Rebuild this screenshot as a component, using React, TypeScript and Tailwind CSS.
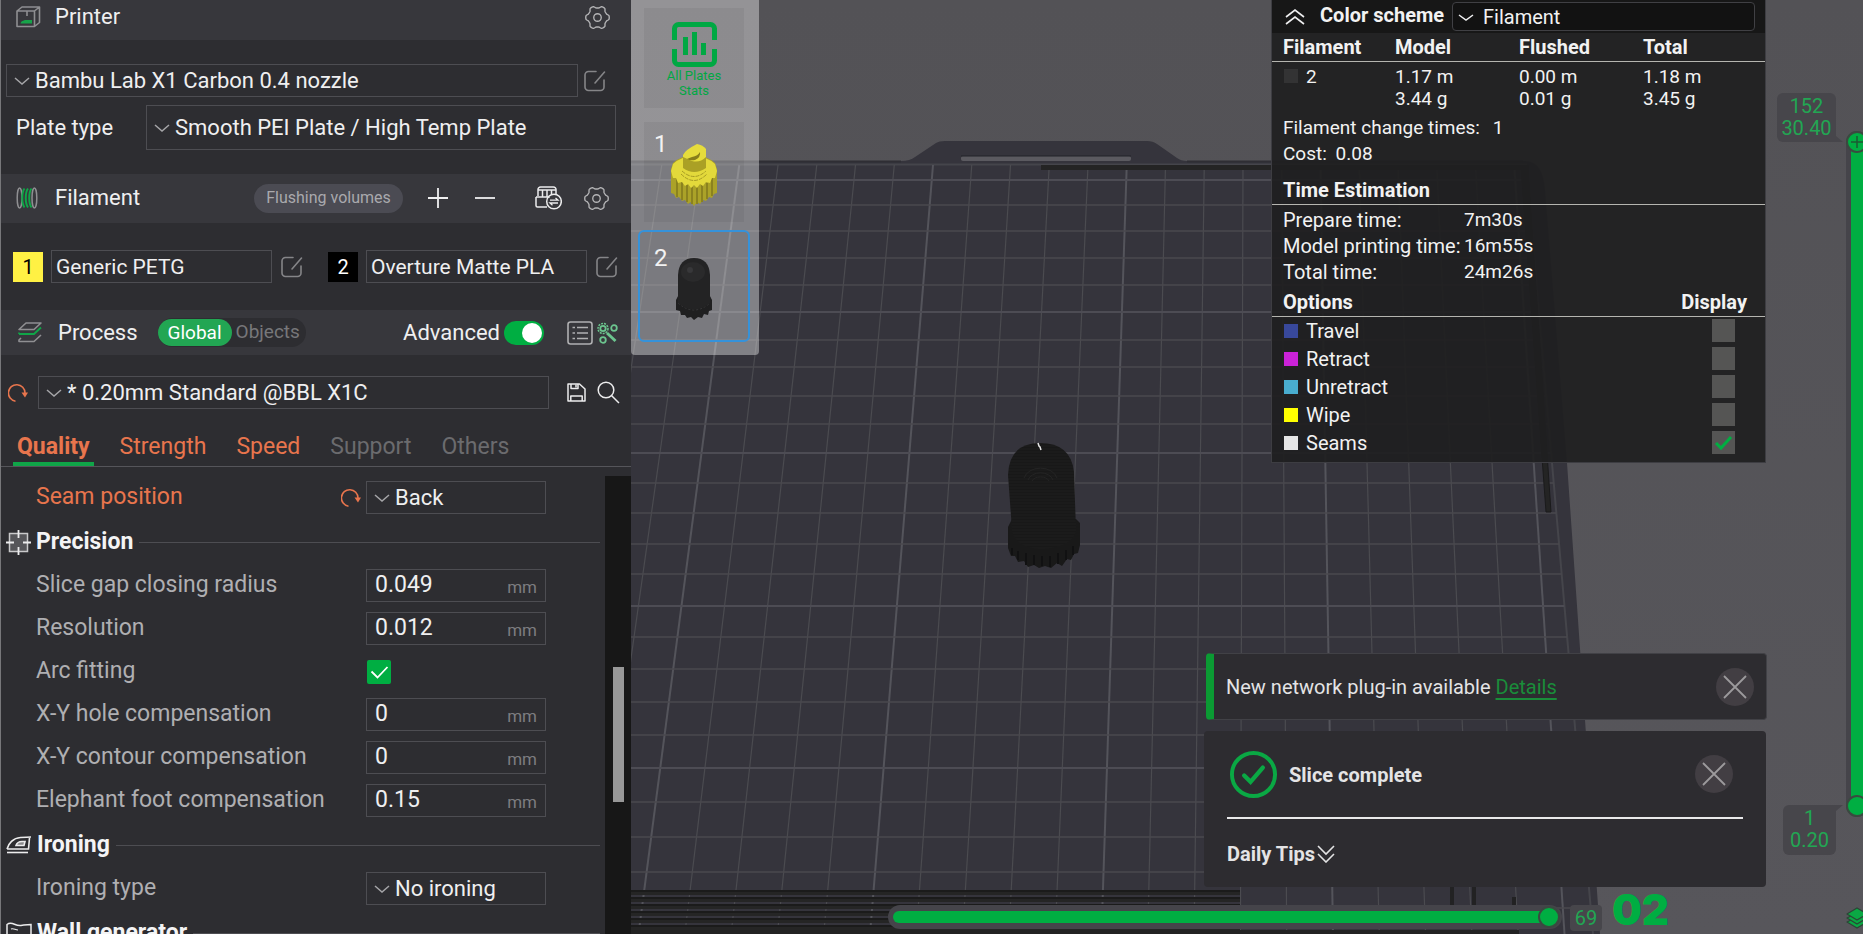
import { useId, useState } from 'react'
import type { ReactNode } from 'react'

/* ---------- icons ---------- */

const gearPath =
  Array.from({ length: 72 }, (_, i) => {
    const a = (i / 72) * Math.PI * 2
    const r = 10.2 + 1.1 * Math.tanh(2.2 * Math.cos(6 * a))
    return `${i ? 'L' : 'M'}${(12 + r * Math.cos(a)).toFixed(2)} ${(12 + r * Math.sin(a)).toFixed(2)}`
  }).join('') + 'Z'

const GearIcon = () => (
  <svg viewBox="0 0 24 24" className="size-[25px]" fill="none" stroke="#b4b4b6" strokeWidth="1.3">
    <path d={gearPath} strokeLinejoin="round" />
    <circle cx="12" cy="12" r="3.6" />
  </svg>
)

const PrinterIcon = () => (
  <svg viewBox="0 0 25 22" className="h-[22px] w-[25px]" fill="none" stroke="#8f8f92" strokeWidth="1.6">
    <path d="M1 5h17.500v15.500H1zM1 5l5-4h17.500l-5 4M23.500 1v15.500l-5 4" strokeLinejoin="round" />
    <path d="M11 5v5" />
    <path d="M4.500 17.500c1-3 3-2.500 4.500-3.500h7v3.500z" fill="#17a34a" stroke="none" />
  </svg>
)

const SpoolIcon = () => (
  <svg viewBox="0 0 22 22" className="h-[22px] w-[22px]" fill="none" strokeWidth="1.5">
    <ellipse cx="3.600" cy="11" rx="2.400" ry="10" stroke="#8f8f92" />
    <path d="M8.500 1.500c-3 4-3 15 0 19M12 1.500c-3 4-3 15 0 19M15.500 1.500c-3 4-3 15 0 19" stroke="#10a548" strokeWidth="2" />
    <ellipse cx="18.400" cy="11" rx="2.400" ry="10" stroke="#8f8f92" />
  </svg>
)

const LayersIcon = () => (
  <svg viewBox="0 0 24 21" className="ml-[2px] h-[21px] w-6" fill="none" strokeWidth="1.6" strokeLinejoin="round">
    <path d="M8 1h15l-7 6.500H1z" stroke="#8f8f92" />
    <path d="M1 12h15l7-6.500" stroke="#10a548" strokeWidth="1.9" />
    <path d="M1 17.500v2h15l7-6.500M3 16l-2 2" stroke="#8f8f92" />
    <path d="M1 10.500v1.500" stroke="#10a548" />
  </svg>
)

const EditIcon = () => (
  <svg viewBox="0 0 22 22" className="size-[22px]" fill="none" stroke="#858588" strokeWidth="1.6" strokeLinecap="round">
    <path d="M12 1.500H4.500a3.500 3.500 0 0 0-3.500 3.500v12a3.500 3.500 0 0 0 3.500 3.500h12A3.500 3.500 0 0 0 20 17v-7" />
    <path d="M20.500 2L11 13" />
  </svg>
)

const AmsIcon = () => (
  <svg viewBox="0 0 27 24" className="h-6 w-[27px]" fill="none" stroke="#ececed" strokeWidth="1.5">
    <path d="M3 10V3.500A2.500 2.500 0 0 1 5.500 1h13A2.500 2.500 0 0 1 21 3.500V9" />
    <path d="M3 4h18M7.500 4v6.500M12 4v6.500M16.500 4v4M1 11h13v-.5M1 11v8.500A1.500 1.500 0 0 0 2.500 21H12" />
    <circle cx="19" cy="15.500" r="7.300" />
    <path d="M15 14.200h8l-2.500-2.200M23 17h-8l2.500 2.200" strokeWidth="1.3" />
  </svg>
)

const ResetIcon = () => (
  <svg viewBox="0 0 20 20" className="size-5" fill="none" stroke="#e8754d" strokeWidth="1.6">
    <path d="M7.500 18.200A8.300 8.300 0 1 1 17 10" />
    <path d="M13.500 9.500h6.500l-3 5z" fill="#e8754d" stroke="none" />
  </svg>
)

const SaveIcon = () => (
  <svg viewBox="0 0 19 19" className="size-[19px]" fill="none" stroke="#ececed" strokeWidth="1.5">
    <path d="M1 1h11.500l5.500 5v12H1zM4 1v4.500h7V1M3.800 18v-5h11.400v5" strokeLinejoin="round" />
    <path d="M9 1.500v3" />
  </svg>
)

const SearchIcon = () => (
  <svg viewBox="0 0 23 23" className="size-[23px]" fill="none" stroke="#ececed" strokeWidth="1.5">
    <circle cx="9" cy="9" r="7.800" />
    <path d="M14.500 14.500l7.500 7.500" />
  </svg>
)

const ListIcon = () => (
  <svg viewBox="0 0 26 24" className="h-6 w-[26px]" fill="none" stroke="#b0b0b2" strokeWidth="1.6">
    <rect x="1" y="1" width="24" height="22" rx="2.500" />
    <path d="M10 6.500h11M10 12h11M10 17.500h11M5.500 6.500h2.500M5.500 12h2.500M5.500 17.500h2.500" />
  </svg>
)

const TuneIcon = () => (
  <svg viewBox="0 0 21 22" className="h-[22px] w-[21px]" fill="none" stroke="#6cc58f" strokeWidth="1.8">
    <circle cx="6" cy="6.500" r="5" strokeDasharray="2 1" strokeWidth="1.500" />
    <circle cx="6" cy="6.500" r="2.700" />
    <circle cx="17" cy="6" r="2.800" />
    <circle cx="6" cy="18" r="2.800" />
    <path d="M10 11l8.500 8" strokeWidth="3" />
  </svg>
)

const PrecisionIcon = () => (
  <svg viewBox="0 0 25 25" className="size-[25px] shrink-0" fill="none" stroke="#ececed" strokeWidth="1.5">
    <rect x="3.500" y="3.500" width="18" height="18" fill="#56565a" stroke="#c9c9cb" />
    <path d="M12.500 0v8M12.500 17v8M0 12.500h8M17 12.500h8" strokeWidth="1.8" />
  </svg>
)

const IroningIcon = () => (
  <svg viewBox="0 0 26 18" className="h-[18px] w-[26px] shrink-0" fill="none" stroke="#ececed" strokeWidth="1.6">
    <path d="M1 13c1.500-5.500 6-11 13.500-11.500 4-.3 7-.5 10.500-.5M1 13h21.500L23.500 2" />
    <path d="M10 9.500c1-3 3-4 6-4h3l-1 4z" fill="#8a8a8c" />
    <path d="M1 16.500h21" />
  </svg>
)

const WallIcon = () => (
  <svg viewBox="0 0 26 24" className="h-6 w-[26px] shrink-0" fill="none" stroke="#ececed" strokeWidth="1.5">
    <path d="M1 3.500c5-4 8 2 14 1 4-.5 6-1 10-1v18H1z" />
    <path d="M5 8c3-1 4 1 7 1" strokeWidth="1.200" />
  </svg>
)

const StatsIcon = () => (
  <svg viewBox="0 0 45 45" className="size-[45px]" fill="none" stroke="#00a843" strokeWidth="5">
    <path d="M2.500 18V6.500a4 4 0 0 1 4-4h32a4 4 0 0 1 4 4V18M2.500 27v11.500a4 4 0 0 0 4 4h32a4 4 0 0 0 4-4V27" />
    <path d="M13.500 33V15M22.500 33V10M31.500 33V21" />
  </svg>
)

const YellowPart = () => (
  <svg viewBox="0 0 48 62" className="h-[62px] w-12">
    <path d="M1 25L3 19Q12 11 24 11T45 19L47 25V49L44 50L42 54L39 53L36 57L33 56L30 60L27 58L24 62L21 58L18 60L15 56L12 57L9 53L6 54L4 50L1 49Z" fill="#aba228" />
    <path d="M7 34V53M12 38V56M17 41V58M22 43V60M27 43V60M32 41V58M37 39V55M42 34V52" stroke="#8b821f" strokeWidth="2" />
    <path d="M1 27L3 20Q12 12 24 12T45 20L47 27L45 34L42 34L40 39L36 38L33 42L30 40L27 44L24 41L21 44L18 40L15 42L12 38L8 39L6 34L3 34Z" fill="#e3d93b" />
    <path d="M11 30Q24 43 37 30M12 27Q24 38 36 27" fill="none" stroke="#a79c24" strokeWidth="1" strokeDasharray="4 1" />
    <path d="M13 10V24Q24 32 36 24V8Z" fill="#aaa025" />
    <path d="M13 11Q15 6 27 0Q33 1 36 5V13Q30 19 22 17L13 13Z" fill="#e6dc3c" />
    <path d="M17 15Q19 14 22 13Q28 12 30 8Q31 13 25 16Q20 17 17 15Z" fill="#877d1b" />
  </svg>
)

const BlackPart = () => (
  <svg viewBox="0 0 36 62" className="h-[62px] w-9">
    <path d="M0 42L3 36H33L36 42V52L33 53L32 57L28 56L26 60L22 59L18 62L15 59L11 60L9 57L5 57L4 53L0 52Z" fill="#1f1f20" />
    <path d="M2 45Q18 59 34 45" fill="none" stroke="#3a3a3b" strokeDasharray="2 2" />
    <path d="M2 17Q3 0 18 0T34 17V45Q18 58 2 45Z" fill="#232324" />
    <ellipse cx="17" cy="14" rx="12" ry="10" fill="#2a2a2b" />
    <circle cx="14" cy="12" r="3" fill="#38383a" />
  </svg>
)

/* ---------- left panel ---------- */

const BOX = 'h-[33px] border border-[#4d4d52] bg-transparent text-[#efeff0]'

type PickerProps = { label: string; value: string; className?: string; tall?: boolean }

const Picker = ({ label, value, className = '', tall }: PickerProps) => (
  <div className={`relative ${className}`}>
    <svg viewBox="0 0 16 8" className="pointer-events-none absolute top-1/2 left-2 -mt-1 h-2 w-4" fill="none" stroke="#a5a5a8" strokeWidth="1.5">
      <path d="M1 1l7 6 7-6" />
    </svg>
    <select
      aria-label={label}
      className={`w-full appearance-none border border-[#4d4d52] bg-[#2d2d31] pl-7 text-[22px] leading-[30px] text-[#efeff0] ${tall ? 'h-[45px]' : 'h-[33px]'}`}
    >
      <option>{value}</option>
    </select>
  </div>
)

type PanelHeaderProps = { icon: ReactNode; title: string; className?: string; children?: ReactNode }

const PanelHeader = ({ icon, title, className = '', children }: PanelHeaderProps) => (
  <header className={`flex items-center bg-[#37373c] pl-[15px] ${className}`}>
    <span className="flex w-[39px] shrink-0">{icon}</span>
    <h2 className="text-[22px] leading-7 text-[#efeff0]">{title}</h2>
    {children}
  </header>
)

const FilamentSlot = ({ index, name, swatch }: { index: number; name: string; swatch: string }) => (
  <div className="flex items-center">
    <button className={`mr-2 size-[30px] text-xl ${swatch}`}>{index}</button>
    <input aria-label={`Filament ${index}`} defaultValue={name} className={`${BOX} w-[221px] px-1 text-[21px]`} />
    <button aria-label={`Edit filament ${index}`} className="ml-[9px]"><EditIcon /></button>
  </div>
)

const SectionTitle = ({ icon, title }: { icon: ReactNode; title: string }) => (
  <div className="flex h-[55px] shrink-0 items-center px-[5px] pt-px">
    {icon}
    <h3 className="ml-[5px] text-[23px] font-bold text-[#f4f4f5]">{title}</h3>
    <span className="ml-[6px] h-px flex-1 bg-[#4d4d52]" />
  </div>
)

const Row = ({ label, children, changed, id }: { label: string; children: ReactNode; changed?: boolean; id?: string }) => (
  <div className="flex h-[33px] shrink-0 items-center pl-[35px]">
    <label htmlFor={id} className={`w-[305px] text-[23px] ${changed ? 'text-[#e8754d]' : 'text-[#afafb2]'}`}>{label}</label>
    <span className="flex w-[25px]">{changed && <button aria-label={`Reset ${label}`}><ResetIcon /></button>}</span>
    {children}
  </div>
)

const NumberRow = ({ label, value }: { label: string; value: string }) => {
  const id = useId()
  return (
    <Row label={label} id={id}>
      <div className={`${BOX} flex w-[180px] items-center px-2`}>
        <input id={id} defaultValue={value} className="w-full min-w-0 bg-transparent text-[23px]" />
        <span className="pt-1 text-[17px] text-[#7d7d80]">mm</span>
      </div>
    </Row>
  )
}

const tabs = [
  { name: 'Quality', style: 'font-bold text-[#e8754d]' },
  { name: 'Strength', style: 'text-[#e8754d]' },
  { name: 'Speed', style: 'text-[#e8754d]' },
  { name: 'Support', style: 'text-[#6b6b6e]' },
  { name: 'Others', style: 'text-[#6b6b6e]' },
]

const Sidebar = () => (
  <aside className="flex w-[631px] shrink-0 flex-col overflow-hidden border-l border-[#77777a] bg-[#2d2d31]">
    <PanelHeader icon={<PrinterIcon />} title="Printer" className="h-10 pb-[6px]">
      <button aria-label="Printer settings" className="mr-[21px] ml-auto"><GearIcon /></button>
    </PanelHeader>

    <div className="flex flex-col gap-2 pt-6 pb-6">
      <div className="flex items-center pl-[5px]">
        <Picker label="Printer" value="Bambu Lab X1 Carbon 0.4 nozzle" className="w-[572px]" />
        <button aria-label="Edit printer" className="ml-[6px]"><EditIcon /></button>
      </div>
      <div className="flex items-center pr-[15px] pl-[15px]">
        <span className="w-[130px] text-[22px] text-[#efeff0]">Plate type</span>
        <Picker label="Plate type" value="Smooth PEI Plate / High Temp Plate" className="flex-1" tall />
      </div>
    </div>

    <PanelHeader icon={<SpoolIcon />} title="Filament" className="h-[49px] pb-px">
      <div className="mr-[22px] ml-auto flex items-center">
        <button className="h-[29px] w-[149px] rounded-full bg-[#4b4b53] text-base text-[#a9a9ad]">Flushing volumes</button>
        <button aria-label="Add filament" className="ml-[25px]">
          <svg viewBox="0 0 20 20" className="size-5" stroke="#efeff0" strokeWidth="1.8"><path d="M10 0v20M0 10h20" /></svg>
        </button>
        <button aria-label="Remove filament" className="ml-[27px]">
          <svg viewBox="0 0 20 20" className="size-5" stroke="#efeff0" strokeWidth="1.8"><path d="M0 10h20" /></svg>
        </button>
        <button aria-label="Sync AMS" className="ml-10"><AmsIcon /></button>
        <button aria-label="Filament settings" className="ml-[22px]"><GearIcon /></button>
      </div>
    </PanelHeader>

    <div className="flex gap-[25px] py-[27px] pl-3">
      <FilamentSlot index={1} name="Generic PETG" swatch="bg-[#fff144] text-black" />
      <FilamentSlot index={2} name="Overture Matte PLA" swatch="bg-black text-white" />
    </div>

    <PanelHeader icon={<LayersIcon />} title="Process" className="h-[45px] gap-[3px]">
      <div className="ml-[17px] flex h-[29px] items-center rounded-full bg-[#2d2d31] text-[19px] text-[#77777a]">
        <button className="h-[27px] w-[74px] rounded-full bg-[#22a653] text-white">Global</button>
        <button className="pr-[6px] pl-1">Objects</button>
      </div>
      <div className="mr-[13px] ml-auto flex items-center">
        <label htmlFor="advanced" className="text-[22px] text-[#efeff0]">Advanced</label>
        <span className="relative ml-1 flex">
          <input id="advanced" type="checkbox" defaultChecked className="peer h-6 w-10 appearance-none rounded-full bg-[#6b6b6e] checked:bg-[#00ae42]" />
          <span className="pointer-events-none absolute top-[2px] right-[2px] size-5 rounded-full bg-white" />
        </span>
        <button aria-label="Parameter list" className="ml-[23px]"><ListIcon /></button>
        <button aria-label="Tune parameters" className="ml-1"><TuneIcon /></button>
      </div>
    </PanelHeader>

    <div className="flex items-center pt-[21px] pl-[7px]">
      <button aria-label="Reset preset"><ResetIcon /></button>
      <Picker label="Process preset" value="* 0.20mm Standard @BBL X1C" className="ml-[10px] w-[511px]" />
      <button aria-label="Save preset" className="ml-[18px]"><SaveIcon /></button>
      <button aria-label="Search" className="ml-[11px]"><SearchIcon /></button>
    </div>

    <nav className="mt-[23px] flex border-b border-[#55555a] pl-3">
      {tabs.map((tab, i) => (
        <button
          key={tab.name}
          className={`h-[34px] px-1 text-[23px] leading-[30px] ${i === 0 ? 'mr-[22px] border-b-4 border-[#10a548]' : 'mr-[22px] pb-1'} ${tab.style}`}
        >
          {tab.name}
        </button>
      ))}
    </nav>

    <div className="flex min-h-0 flex-1">
      <div className="flex min-w-0 flex-1 flex-col overflow-hidden pt-[14px]">
        <Row label="Seam position" changed>
          <Picker label="Seam position" value="Back" className="w-[180px]" />
        </Row>
        <SectionTitle icon={<PrecisionIcon />} title="Precision" />
        <div className="flex shrink-0 flex-col gap-[10px]">
          <NumberRow label="Slice gap closing radius" value="0.049" />
          <NumberRow label="Resolution" value="0.012" />
          <Row label="Arc fitting" id="arc">
            <span className="relative ml-px flex">
              <input id="arc" type="checkbox" defaultChecked className="size-6 appearance-none rounded-xs bg-[#6b6b6e] checked:bg-[#00ae42]" />
              <svg viewBox="0 0 24 24" className="pointer-events-none absolute inset-0" fill="none" stroke="#fff" strokeWidth="1.8">
                <path d="M4.500 11.500l6 6L20.500 7" />
              </svg>
            </span>
          </Row>
          <NumberRow label="X-Y hole compensation" value="0" />
          <NumberRow label="X-Y contour compensation" value="0" />
          <NumberRow label="Elephant foot compensation" value="0.15" />
        </div>
        <SectionTitle icon={<IroningIcon />} title="Ironing" />
        <Row label="Ironing type">
          <Picker label="Ironing type" value="No ironing" className="w-[180px]" />
        </Row>
        <SectionTitle icon={<WallIcon />} title="Wall generator" />
      </div>
      <div className="mt-[9px] w-[26px] bg-[#171717] pt-[191px] pl-2">
        <div className="h-[135px] w-[11px] bg-[#989898]" />
      </div>
    </div>
  </aside>
)

/* ---------- build plate ---------- */

const columns = Array.from({ length: 24 }, (_, i) => i - 8)
const rows = [180, 205, 231, 258, 285, 312, 340, 367, 396, 424, 453, 483, 513, 544, 574, 606, 637, 669, 702, 735, 768, 802, 837, 872, 908]
const stripes = [890, 897, 904, 911, 918, 925]

// x of a grid column at the far edge and at the bottom of the view
const far = (i: number) => 302 + 38.75 * i
const near = (i: number) => 239 + 46.3 * i

const BuildPlate = () => (
  <svg viewBox="0 0 1232 934" preserveAspectRatio="xMinYMin slice" className="absolute inset-0 h-full w-full">
    <defs>
      <linearGradient id="backdrop" x1="0" y1="0" x2="0" y2="1">
        <stop offset="0" stopColor="#535256" />
        <stop offset="1" stopColor="#57565b" />
      </linearGradient>
      <pattern id="shell" width="3" height="3" patternUnits="userSpaceOnUse">
        <rect width="3" height="3" fill="#181818" />
        <path d="M0 2h3" stroke="#1e1e1e" />
      </pattern>
    </defs>
    <rect width="1232" height="934" fill="url(#backdrop)" />
    <path d="M0 161H270Q279 161 284 157L305 143Q308 141 314 141H516Q522 141 526 144L546 158Q550 161 556 161H895Q912 162 914 190L936 463L969 934H0Z" fill="#35343c" />
    <rect x="330" y="156" width="170" height="5" rx="2" fill="#5b5a60" />
    <path d="M330 156h170" stroke="#232328" />
    <path d="M0 161.500H270M556 161.500H892" stroke="#2f2e34" strokeWidth="2" />
    <path d="M0 164.500H895L962 934" fill="none" stroke="#45454b" strokeWidth="2" />
    {columns.map((i) => (
      <path key={i} d={`M${far(i)} 165L${near(i)} 934`} stroke={i % 5 ? '#4b4b50' : '#54545b'} strokeWidth={i % 5 ? 1.2 : 2} />
    ))}
    {rows.map((y, i) => (
      <path key={y} d={`M0 ${y}H${895 + (y - 165) * 0.087}`} stroke={i % 5 ? '#4a494e' : '#4d4c54'} strokeWidth={i % 5 ? 1.3 : 2} />
    ))}
    <path d="M410 167.500H898" stroke="#242424" strokeWidth="5" />
    <path d="M890 168L915 512H920L897 168Z" fill="#242424" stroke="#1b1b1c" />
    {stripes.map((y) => (
      <g key={y}>
        <path d={`M0 ${y + 2.5}H609`} stroke="#252525" strokeWidth="5" />
        <path d={`M0 ${y + 1}H609`} stroke="#191919" strokeWidth="1.5" />
      </g>
    ))}
    <path d="M0 932H888" stroke="#222" strokeWidth="4" />
    <path d="M821 887v19M843 887v19M883 897v9" stroke="#222223" strokeWidth="4" />
    {/* sliced model */}
    <path
      d="M377 527L381 519H445L449 523V545L447 553L443 554L440 560L436 559L431 566L426 563L420 568L414 566L408 568L403 565L397 567L393 561L387 562L384 556L380 556L377 548Z"
      fill="#191919"
    />
    <path d="M381 548v7M387 551v9M395 553v12M403 555v10M411 556v10M419 556v11M427 553v11M435 550v10M442 546v9" stroke="#111112" strokeWidth="2" />
    <path d="M377 475Q378 443 409 443T443 472L445 530Q443 546 412 549Q384 548 381 530Z" fill="url(#shell)" />
    <path d="M401 481a9 6 0 0 1 17 0M397 480a13 10 0 0 1 25 0M393 478a17 13 0 0 1 33 0" fill="none" stroke="#242424" />
    <path d="M407 443l1 3 1 1 1 3" fill="none" stroke="#e8e8e8" strokeWidth="1.5" />
  </svg>
)

/* ---------- overlays on the canvas ---------- */

const PlateList = () => (
  <div className="absolute top-0 left-0 flex w-32 flex-col items-center gap-[14px] rounded-b-sm bg-white/38 pt-2 pr-[2px] pb-[13px] text-[#f2f2f2]">
    <button className="flex h-[100px] w-[100px] flex-col items-center bg-black/5 pt-[14px] text-[13px] leading-[15px] text-[#00a843]">
      <StatsIcon />
      <span className="mt-px w-16">All Plates Stats</span>
    </button>
    <button className="relative flex h-[100px] w-[100px] justify-center bg-black/5 pt-[22px] text-2xl leading-none">
      <span className="absolute top-[10px] left-[10px]">1</span>
      <YellowPart />
    </button>
    <button className="relative -mt-[6px] flex h-28 w-28 justify-center rounded-md border-2 border-[#3592da] bg-black/5 pt-[26px] text-2xl leading-none">
      <span className="absolute top-[14px] left-[14px]">2</span>
      <BlackPart />
    </button>
  </div>
)

const usage = [{ id: 2, model: ['1.17 m', '3.44 g'], flushed: ['0.00 m', '0.01 g'], total: ['1.18 m', '3.45 g'] }]

const times = [
  ['Prepare time:', '7m30s'],
  ['Model printing time:', '16m55s'],
  ['Total time:', '24m26s'],
]

const moves = [
  { name: 'Travel', color: 'bg-[#38489b]' },
  { name: 'Retract', color: 'bg-[#cb22d8]' },
  { name: 'Unretract', color: 'bg-[#49adcf]' },
  { name: 'Wipe', color: 'bg-[#ffff00]' },
  { name: 'Seams', color: 'bg-[#e6e6e6]' },
]

const Legend = () => {
  const [shown, setShown] = useState<Record<string, boolean>>({ Seams: true })
  return (
    <section className="absolute top-0 right-[97px] h-[463px] w-[495px] border border-t-0 border-[#3d3d42] bg-[#1f1f20]/93 text-xl leading-[22px] text-[#f2f2f2]">
      <div className="flex h-[33px] items-center bg-[#171717] pr-[10px] pl-[13px]">
        <button aria-label="Collapse">
          <svg viewBox="0 0 20 16" className="h-4 w-5" fill="none" stroke="#efeff0" strokeWidth="1.6">
            <path d="M1 8l9-7 9 7M1 15l9-7 9 7" />
          </svg>
        </button>
        <label htmlFor="scheme" className="ml-[15px] flex-1 pb-1 font-bold">Color scheme</label>
        <div className="relative w-[303px]">
          <svg viewBox="0 0 16 8" className="pointer-events-none absolute top-3 left-[6px] h-2 w-4" fill="none" stroke="#efeff0" strokeWidth="1.5">
            <path d="M1 1l7 5 7-5" />
          </svg>
          <select id="scheme" className="h-[29px] w-full appearance-none rounded-sm border border-[#404044] bg-[#121212] pl-[30px]">
            <option>Filament</option>
          </select>
        </div>
      </div>

      <table className="w-full table-fixed border-collapse">
        <thead>
          <tr className="h-7 border-b border-[#b5b5b0] text-left">
            <th className="w-[123px] pl-[11px]">Filament</th>
            <th className="w-[124px]">Model</th>
            <th className="w-[124px]">Flushed</th>
            <th>Total</th>
          </tr>
        </thead>
        <tbody className="text-[19px]">
          {usage.map((row) => (
            <tr key={row.id} className="align-top">
              <td className="pt-1 pl-3">
                <span className="mr-2 inline-block size-[14px] bg-[#333334]" />
                {row.id}
              </td>
              {[row.model, row.flushed, row.total].map(([length, weight]) => (
                <td key={length} className="pt-1">{length}<br />{weight}</td>
              ))}
            </tr>
          ))}
        </tbody>
      </table>

      <div className="mt-[5px] pl-[11px] text-[19px] leading-[26px]">
        <p>Filament change times: <span className="ml-2">1</span></p>
        <p>Cost: <span className="ml-1">0.08</span></p>
      </div>

      <h3 className="mt-[10px] border-b border-[#b5b5b0] pb-px pl-[11px] leading-[26px] font-bold">Time Estimation</h3>
      <dl className="pt-[2px] pl-[11px] leading-[26px]">
        {times.map(([label, value]) => (
          <div key={label} className="flex">
            <dt className="w-[181px]">{label}</dt>
            <dd className="text-[19px]">{value}</dd>
          </div>
        ))}
      </dl>

      <div className="mt-1 flex justify-between border-b border-[#b5b5b0] pr-[18px] pb-px pl-[11px] leading-[26px] font-bold">
        <h3>Options</h3>
        <span>Display</span>
      </div>
      <ul>
        {moves.map((move) => (
          <li key={move.name} className="flex h-7 items-center pr-[30px] pl-3">
            <span className={`size-[14px] ${move.color}`} />
            <label htmlFor={move.name} className="ml-2 flex-1">{move.name}</label>
            <span className="relative flex">
              <input
                id={move.name}
                type="checkbox"
                checked={!!shown[move.name]}
                onChange={(e) => setShown({ ...shown, [move.name]: e.target.checked })}
                className="size-[23px] appearance-none bg-[#555554]"
              />
              {shown[move.name] && (
                <svg viewBox="0 0 23 23" className="pointer-events-none absolute inset-0" fill="none" stroke="#00ae42" strokeWidth="3">
                  <path d="M4 12l5 5L19 6" />
                </svg>
              )}
            </span>
          </li>
        ))}
      </ul>
    </section>
  )
}

const CloseButton = () => (
  <button aria-label="Close" className="flex size-[38px] items-center justify-center rounded-full bg-[#423e43]">
    <svg viewBox="0 0 24 24" className="size-6" stroke="#9c9a9c" strokeWidth="1.8"><path d="M1 1l22 22M23 1L1 23" /></svg>
  </button>
)

const Notifications = () => (
  <div className="absolute right-24 bottom-[47px] flex w-[563px] flex-col gap-[11px] text-xl text-[#e4e4e5]">
    <div className="ml-[2px] flex h-[67px] items-center rounded-sm border border-l-8 border-[#414146] border-l-[#0b9a33] bg-[#2d2c30] pr-3 pl-3">
      <p className="flex-1">New network plug-in available <a href="#details" className="text-[#1a8d3a] underline underline-offset-4">Details</a></p>
      <CloseButton />
    </div>
    <div className="mr-px rounded-sm bg-[#2d2c30] px-[23px]">
      <div className="flex h-[88px] items-center border-b-2 border-[#e9e9ea] pr-[10px]">
        <svg viewBox="0 0 50 50" className="mx-[2px] size-[49px]" fill="none" stroke="#0aa844" strokeWidth="4">
          <circle cx="25" cy="25" r="22" />
          <path d="M15.500 26l6.500 6.500L34.500 18" strokeWidth="4.500" strokeLinecap="round" />
        </svg>
        <p className="ml-[9px] flex-1 pt-[2px] font-bold">Slice complete</p>
        <CloseButton />
      </div>
      <button className="flex h-[68px] items-center pt-[2px] font-bold">
        Daily Tips
        <svg viewBox="0 0 18 18" className="ml-[2px] size-[18px]" fill="none" stroke="#e4e4e5" strokeWidth="1.6">
          <path d="M1 1l8 8 8-8M1 9l8 8 8-8" />
        </svg>
      </button>
    </div>
  </div>
)

const THUMB =
  '[&::-webkit-slider-thumb]:size-[22px] [&::-webkit-slider-thumb]:appearance-none [&::-webkit-slider-thumb]:rounded-full [&::-webkit-slider-thumb]:border-2 [&::-webkit-slider-thumb]:border-[#3a4a40] [&::-webkit-slider-thumb]:bg-[#00ae42]'

const VERTICAL = 'pointer-events-none col-start-1 row-start-1 m-0 h-full w-[22px] appearance-none bg-transparent [direction:rtl] [writing-mode:vertical-lr]'

const MoveSlider = () => (
  <div className="absolute right-[189px] bottom-0 left-[257px] flex h-[29px] items-start gap-2">
    <div className="grid h-6 min-w-0 flex-1 items-center rounded-full bg-[#45444a] pr-[2px] pl-[5px]">
      <span className="col-start-1 row-start-1 mr-2 h-3 rounded-full bg-[#00ae42]" />
      <input
        aria-label="Move"
        type="range"
        min={0}
        max={69}
        defaultValue={69}
        className={`col-start-1 row-start-1 m-0 h-[22px] w-full appearance-none bg-transparent ${THUMB}`}
      />
    </div>
    <output className="h-[26px] w-8 rounded-sm bg-[#47464b] text-center text-xl leading-[26px] text-[#22a653]">69</output>
    <strong className="-mt-5 w-16 pl-[2px] font-['Inter'] text-[42px] leading-[50px] font-black text-[#00ae42]">02</strong>
  </div>
)

const LayerSlider = () => (
  <div className="absolute top-[93px] -right-[5px] bottom-0 flex w-[91px] flex-col">
    <output className="relative flex h-[49px] w-[59px] flex-col rounded-md rounded-br-none bg-[#47464b] pt-[2px] text-center text-xl leading-[22px] text-[#22a653]">
      <span>152</span>
      <span>30.40</span>
      <svg viewBox="0 0 7 6" className="absolute bottom-0 left-full h-[6px] w-[7px]" fill="#47464b"><path d="M0 0l7 6H0z" /></svg>
    </output>
    <div className="absolute top-[38px] right-0 grid h-[686px] w-[22px] justify-items-center rounded-full bg-[#45444a]">
      <span className="col-start-1 row-start-1 my-3 w-3 bg-[#00ae42]" />
      <input aria-label="Top layer" type="range" min={1} max={152} defaultValue={152} className={`${VERTICAL} ${THUMB}`} />
      <input aria-label="Bottom layer" type="range" min={1} max={152} defaultValue={1} className={`${VERTICAL} ${THUMB}`} />
      <svg viewBox="0 0 22 22" className="pointer-events-none col-start-1 row-start-1 size-[22px]" stroke="#1c5a33" strokeWidth="1.500">
        <path d="M11 5v12M5 11h12" />
      </svg>
    </div>
    <output className="relative mt-[663px] ml-[6px] flex h-[50px] w-[53px] flex-col rounded-md rounded-tr-none bg-[#47464b] pt-[2px] text-center text-xl leading-[22px] text-[#22a653]">
      <span>1</span>
      <span>0.20</span>
      <svg viewBox="0 0 7 6" className="absolute top-0 left-full h-[6px] w-[7px]" fill="#47464b"><path d="M0 0h7L0 6z" /></svg>
    </output>
    <button aria-label="Layers" className="mt-auto mb-[5px] ml-auto">
      <svg viewBox="0 0 22 22" className="size-[22px]" fill="#0aa844" stroke="#2b4736" strokeWidth="1.300" strokeLinejoin="round">
        <path d="M1 15l10-5 10 5-10 6z" />
        <path d="M1 11l10-5 10 5-10 6z" />
        <path d="M1 7l10-6 10 6-10 6z" />
      </svg>
    </button>
  </div>
)

const App = () => (
  <div className="flex h-screen min-h-[600px] overflow-hidden bg-[#2d2d31] font-['Roboto',sans-serif]">
    <Sidebar />
    <main className="relative min-w-0 flex-1 overflow-hidden">
      <BuildPlate />
      <PlateList />
      <MoveSlider />
      <Legend />
      <Notifications />
      <LayerSlider />
    </main>
  </div>
)

export default App
